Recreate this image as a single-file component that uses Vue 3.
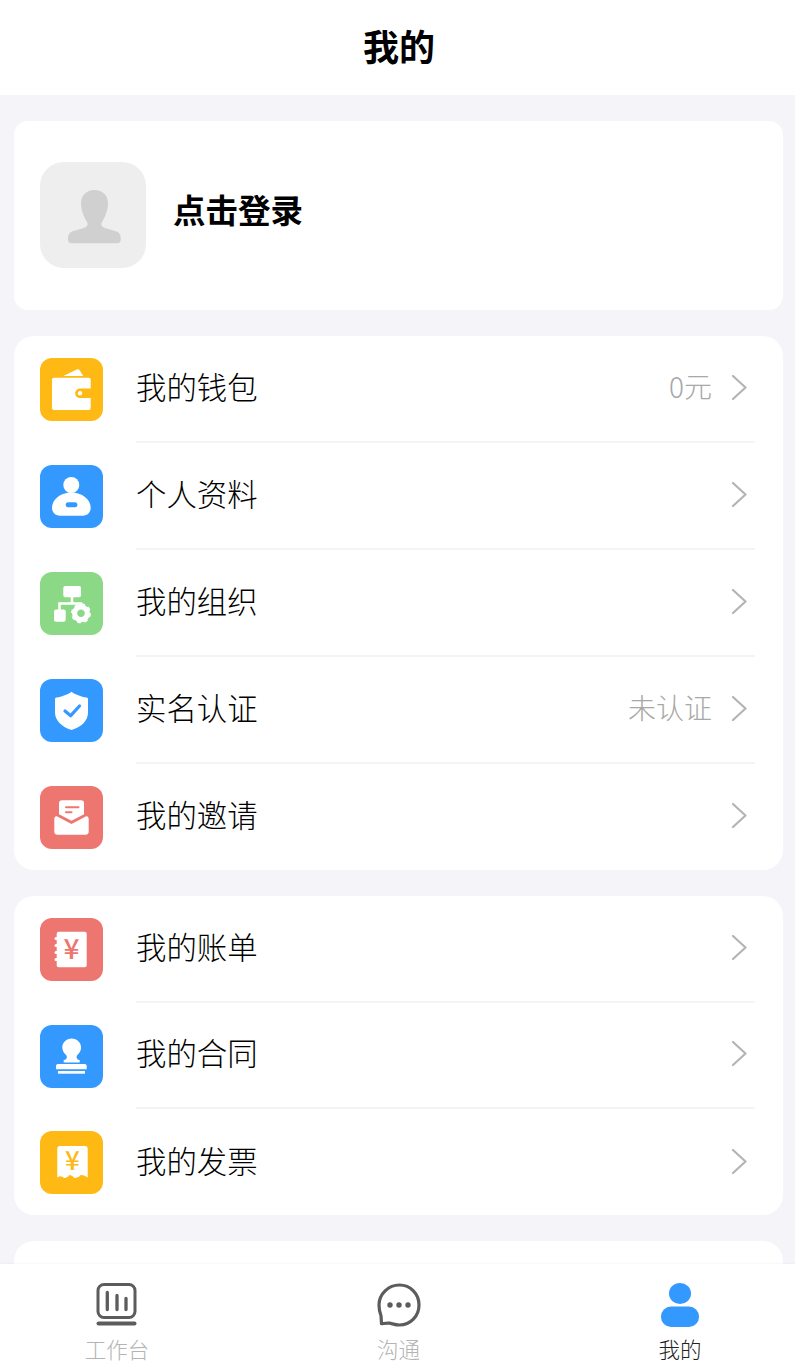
<template>
  <div class="page">
    <div class="header">我的</div>

    <div class="content">
      <div class="card login">
        <div class="avatar">
          <svg viewBox="0 0 106 106" width="106" height="106">
            <path fill="#d0d0d0" d="M54.5 28c8 0 13.500 5.500 13.500 13 0 7.500-3 14-6 19-1.500 3 0 5 3 6l11 3.200c3 1 4.700 3.300 4.700 6.300v2.500c0 2-1.500 3.300-3.500 3.300H31.500c-2 0-3.500-1.300-3.500-3.300v-2.500c0-3 1.700-5.300 4.700-6.300L44 66c3-1 4.500-3 3-6-3-5-6-11.500-6-19 0-7.500 5.500-13 13.500-13z" />
          </svg>
        </div>
        <span class="login-text">点击登录</span>
      </div>

      <div class="card" v-for="(group, i) in groups" :key="i">
        <div class="row" v-for="item in group" :key="item.name">
          <div class="icon" :class="item.color">
            <!-- 钱包 -->
            <svg v-if="item.icon === 'wallet'" viewBox="0 0 63 63" width="63" height="63">
              <path fill="#fff" d="M23.300 18l13.500-6.400c1.100-.5 2.100-.3 2.800.7l3.700 5.700z" />
              <path fill="#fff" d="M14 19.700h34.700c1.100 0 2 .9 2 2v8.800H40c-2.700 0-4.800 2.200-4.800 4.800s2.100 4.800 4.800 4.800h10.700v10c0 1.100-.9 2-2 2H14c-1.100 0-2-.9-2-2V21.700c0-1.100.9-2 2-2z" />
              <circle cx="40" cy="35.300" r="2.200" fill="#fff" />
            </svg>
            <!-- 个人资料 -->
            <svg v-else-if="item.icon === 'person'" viewBox="0 0 63 63" width="63" height="63">
              <circle cx="31.300" cy="20" r="8" fill="#fff" />
              <path fill="#fff" d="M31.300 27.500c10.500 0 19.400 6.500 19.400 15.500 0 4.300-3.400 7.700-7.700 7.700H19.700c-4.300 0-7.700-3.400-7.700-7.700 0-9 8.800-15.500 19.300-15.500z" />
              <rect x="25.700" y="37.300" width="11.700" height="5" rx="2.500" fill="#3399ff" />
            </svg>
            <!-- 组织 -->
            <svg v-else-if="item.icon === 'org'" viewBox="0 0 63 63" width="63" height="63">
              <rect x="23.300" y="14" width="17.700" height="11.300" rx="2" fill="#fff" />
              <path fill="none" stroke="#fff" stroke-width="2.600" d="M32 25v6.500M19.500 38v-6.500h21.500V36" />
              <rect x="14" y="37.500" width="11.700" height="12.300" rx="2" fill="#fff" />
              <g transform="translate(41 41.300)">
                <circle r="6.400" fill="none" stroke="#fff" stroke-width="5.200" />
                <circle r="8.800" fill="none" stroke="#fff" stroke-width="2.400" stroke-dasharray="3.600 3.310" />
              </g>
            </svg>
            <!-- 实名认证 -->
            <svg v-else-if="item.icon === 'shield'" viewBox="0 0 63 63" width="63" height="63">
              <path fill="#fff" d="M31.500 12.700c3.500 2.700 9.500 5 15 5.800.9.100 1.500.8 1.500 1.700v13.300c0 8.500-7 14.800-16.500 17.500C22 48 15 41.700 15 33.500V20.200c0-.9.600-1.600 1.500-1.700 5.500-.8 11.500-3.100 15-5.800z" />
              <path fill="none" stroke="#3399ff" stroke-width="3.200" stroke-linecap="round" stroke-linejoin="round" d="M25 32l5.700 4.700 8.800-9.700" />
            </svg>
            <!-- 邀请 -->
            <svg v-else-if="item.icon === 'mail'" viewBox="0 0 63 63" width="63" height="63">
              <path fill="#fff" d="M22 14.300h19a3 3 0 0 1 3 3v11l-12.500 6.500L19 28.300v-11a3 3 0 0 1 3-3z" />
              <path fill="none" stroke="#ee7670" stroke-width="2" stroke-linecap="round" d="M26 21.300h12.500M26 26.300h5.500" />
              <path fill="#fff" d="M14.300 33c0-2 1.500-3.300 3-2.500l14.200 7.500 14.200-7.500c1.500-.8 3 .5 3 2.500v12.700c0 1.700-1.300 3-3 3H17.300c-1.700 0-3-1.300-3-3z" />
            </svg>
            <!-- 账单 -->
            <svg v-else-if="item.icon === 'bill'" viewBox="0 0 63 63" width="63" height="63">
              <rect x="16.700" y="13.700" width="30" height="35.600" rx="2" fill="#fff" />
              <path fill="none" stroke="#fff" stroke-width="3" stroke-linecap="round" d="M16 20.500h.5M16 27.500h.5M16 34.500h.5M16 41.500h.5" />
              <text x="31.500" y="41" class="yuan big" fill="#ee7670">¥</text>
            </svg>
            <!-- 合同 -->
            <svg v-else-if="item.icon === 'stamp'" viewBox="0 0 63 63" width="63" height="63">
              <path fill="#fff" d="M31.700 13.500c5.200 0 9.400 4 9.400 9 0 3.200-1.700 5.500-3.800 7.500-1 1-1 3 0 4 .6.600 1.700 1 2.400 1v2.400H23.700V35c.7 0 1.800-.4 2.400-1 1-1 1-3 0-4-2.100-2-3.800-4.300-3.800-7.500 0-5 4.200-9 9.400-9z" />
              <path fill="#fff" d="M18 39h26.700c1.100 0 2 .9 2 2v3.300H16V41c0-1.100.9-2 2-2z" />
              <rect x="18" y="46" width="27" height="2.700" fill="#fff" />
            </svg>
            <!-- 发票 -->
            <svg v-else-if="item.icon === 'receipt'" viewBox="0 0 63 63" width="63" height="63">
              <path fill="#fff" d="M20 15H45a2.700 2.700 0 0 1 2.700 2.700V46.500Q44 43.500 41 44Q37.500 47.500 34.500 47Q32 44 29.500 44Q27 47.500 24 47Q21 44 17.300 46.500V17.700A2.700 2.700 0 0 1 20 15z" />
              <text x="32.500" y="39" class="yuan" fill="#ffb915">¥</text>
            </svg>
          </div>
          <div class="row-main">
            <span class="name">{{ item.name }}</span>
            <span class="extra" v-if="item.extra">{{ item.extra }}</span>
            <svg class="arrow" viewBox="0 0 16 27" width="16" height="27">
              <path fill="none" stroke="#b4b4b4" stroke-width="2.200" stroke-linecap="round" stroke-linejoin="round" d="M2 2l12.500 11.500L2 25" />
            </svg>
          </div>
        </div>
      </div>

      <div class="card last"></div>
    </div>

    <div class="tabbar">
      <div class="tab">
        <svg viewBox="0 0 44 44" width="44" height="44">
          <rect x="3" y="1.500" width="37" height="33" rx="6" fill="none" stroke="#5c5c5c" stroke-width="3" />
          <path fill="none" stroke="#5c5c5c" stroke-width="3.300" stroke-linecap="round" d="M12.300 9.500v17M22 12.500v14M31 15.500v11" />
          <rect x="1.500" y="38.500" width="40" height="4" rx="2" fill="#5c5c5c" />
        </svg>
        <span>工作台</span>
      </div>
      <div class="tab">
        <svg viewBox="0 0 44 44" width="44" height="44">
          <path fill="none" stroke="#5c5c5c" stroke-width="3.200" stroke-linejoin="round" d="M22.500 2C33.500 2 42 10.800 42 22s-8.500 20-19.500 20c-4.500 0-7.500-1.500-10-1.800-3-.3-6.500.5-8 .5l-.5-8C3 30 2 26 2 22 2 10.800 11.500 2 22.500 2z" />
          <circle cx="13" cy="22" r="2.700" fill="#5c5c5c" />
          <circle cx="22" cy="22" r="2.700" fill="#5c5c5c" />
          <circle cx="31" cy="22" r="2.700" fill="#5c5c5c" />
        </svg>
        <span>沟通</span>
      </div>
      <div class="tab active">
        <svg viewBox="0 0 44 44" width="44" height="44">
          <ellipse cx="22" cy="10.500" rx="11" ry="10.500" fill="#3399ff" />
          <rect x="3" y="23.500" width="38" height="20.500" rx="10" fill="#3399ff" />
        </svg>
        <span>我的</span>
      </div>
    </div>
  </div>
</template>

<script setup>
const groups = [
  [
    { name: '我的钱包', icon: 'wallet', color: 'yellow', extra: '0元' },
    { name: '个人资料', icon: 'person', color: 'blue' },
    { name: '我的组织', icon: 'org', color: 'green' },
    { name: '实名认证', icon: 'shield', color: 'blue', extra: '未认证' },
    { name: '我的邀请', icon: 'mail', color: 'red' }
  ],
  [
    { name: '我的账单', icon: 'bill', color: 'red' },
    { name: '我的合同', icon: 'stamp', color: 'blue' },
    { name: '我的发票', icon: 'receipt', color: 'yellow' }
  ]
];
</script>

<style>
html,
body {
  margin: 0;
  background: #f4f4f9;
}
</style>

<style scoped>
.page {
  position: relative;
  height: 1371px;
  overflow: hidden;
  background: #f4f4f9;
  font-family: "Noto Sans CJK SC", "Liberation Sans", sans-serif;
  color: #000;
}

.header {
  height: 95px;
  line-height: 90px;
  padding-left: 3px;
  text-align: center;
  background: #fff;
  font-size: 36px;
  font-weight: 700;
}

.content {
  padding: 26.050px 12px 0 14px;
  display: flex;
  flex-direction: column;
  gap: 26px;
}

.card {
  background: #fff;
  border-radius: 20px;
  padding-left: 26px;
}

.login {
  height: 189px;
  box-sizing: border-box;
  padding-bottom: 2px;
  border-radius: 14px;
  display: flex;
  align-items: center;
  gap: 27px;
}

.avatar {
  width: 106px;
  height: 106px;
  border-radius: 24px;
  background: #eee;
}

.avatar svg {
  display: block;
}

.login-text {
  font-size: 32.500px;
  font-weight: 700;
  margin-top: -12px;
}

.row {
  display: flex;
  height: 106.900px;
}

.row:last-child {
  height: 106px;
}

.icon {
  width: 63px;
  height: 63px;
  flex-shrink: 0;
  margin-top: 22px;
  border-radius: 12px;
}

.icon svg {
  display: block;
}

.yellow {
  background: #ffb915;
}

.blue {
  background: #3399ff;
}

.green {
  background: #8bd986;
}

.red {
  background: #ee7670;
}

.yuan {
  font-size: 26px;
  font-weight: 500;
  text-anchor: middle;
  font-family: "Noto Sans CJK SC", sans-serif;
}

.yuan.big {
  font-size: 28px;
}

.row-main {
  flex: 1;
  box-sizing: border-box;
  margin: 0 28px 0 33px;
  padding-right: 8px;
  display: flex;
  align-items: center;
  border-bottom: 2px solid #f2f4f8;
}

.row:last-child .row-main {
  border-bottom: none;
}

.name {
  flex: 1;
  font-size: 30.400px;
  font-weight: 300;
  line-height: 40px;
  margin-top: -5px;
}

.extra {
  font-size: 28px;
  font-weight: 300;
  line-height: 40px;
  color: #a8a8a8;
  margin-right: 19px;
  margin-top: -4px;
}

.arrow {
  flex-shrink: 0;
  margin-top: -2px;
}

.last {
  height: 100px;
}

.tabbar {
  position: absolute;
  left: 0;
  right: 0;
  bottom: 0;
  height: 107px;
  box-sizing: border-box;
  padding: 19px 83px 0 85px;
  background: #fff;
  box-shadow: 0 -1px 2px rgba(0, 0, 0, 0.03);
  display: flex;
  justify-content: space-between;
}

.tab {
  width: 64px;
  display: flex;
  flex-direction: column;
  align-items: center;
  gap: 7px;
  font-size: 21.500px;
  font-weight: 300;
  line-height: 30px;
  color: #b4b4b4;
  white-space: nowrap;
}

.tab svg {
  display: block;
}

.tab.active {
  color: #222;
}
</style>
